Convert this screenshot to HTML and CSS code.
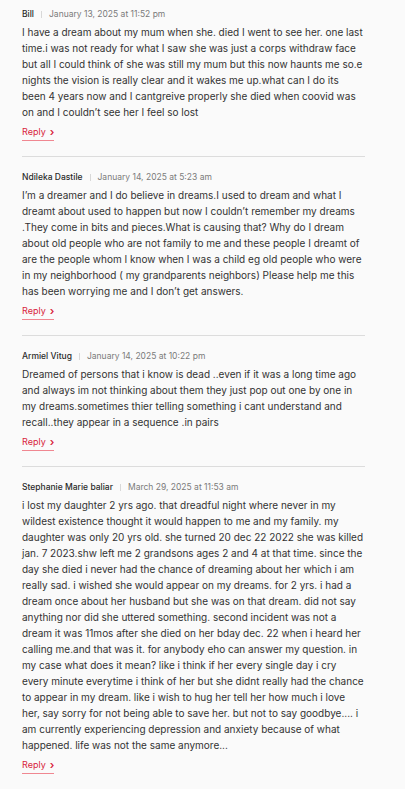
FILE: index.html
```html
<!DOCTYPE html>
<html lang="en">
<head>
<meta charset="utf-8">
<link rel="stylesheet" href="styles.css">
</head>
<body>
<ol class="comments">
  <li class="comment">
    <div class="meta"><span class="name">Bill</span><span class="sep"></span><span class="date">January 13, 2025 at 11:52 pm</span></div>
    <p class="text">I have a dream about my mum when she. died I went to see her. one last time.i was not ready for what I saw she was just a corps withdraw face but all I could think of she was still my mum but this now haunts me so.e nights the vision is really clear and it wakes me up.what can I do its been 4 years now and I cantgreive properly she died when coovid was on and I couldn’t see her I feel so lost</p>
    <a class="reply" href="#">Reply <span class="chev">›</span></a>
  </li>
  <li class="comment">
    <div class="meta"><span class="name">Ndileka Dastile</span><span class="sep"></span><span class="date">January 14, 2025 at 5:23 am</span></div>
    <p class="text">I’m a dreamer and I do believe in dreams.I used to dream and what I dreamt about used to happen but now I couldn’t remember my dreams .They come in bits and pieces.What is causing that? Why do I dream about old people who are not family to me and these people I dreamt of are the people whom I know when I was a child eg old people who were in my neighborhood ( my grandparents neighbors) Please help me this has been worrying me and I don’t get answers.</p>
    <a class="reply" href="#">Reply <span class="chev">›</span></a>
  </li>
  <li class="comment">
    <div class="meta"><span class="name">Armiel Vitug</span><span class="sep"></span><span class="date">January 14, 2025 at 10:22 pm</span></div>
    <p class="text">Dreamed of persons that i know is dead ..even if it was a long time ago and always im not thinking about them they just pop out one by one in my dreams.sometimes thier telling something i cant understand and recall..they appear in a sequence .in pairs</p>
    <a class="reply" href="#">Reply <span class="chev">›</span></a>
  </li>
  <li class="comment">
    <div class="meta"><span class="name">Stephanie Marie baliar</span><span class="sep"></span><span class="date">March 29, 2025 at 11:53 am</span></div>
    <p class="text">i lost my daughter 2 yrs ago. that dreadful night where never in my wildest existence thought it would happen to me and my family. my daughter was only 20 yrs old. she turned 20 dec 22 2022 she was killed jan. 7 2023.shw left me 2 grandsons ages 2 and 4 at that time. since the day she died i never had the chance of dreaming about her which i am really sad. i wished she would appear on my dreams. for 2 yrs. i had a dream once about her husband but she was on that dream. did not say anything nor did she uttered something. second incident was not a dream it was 11mos after she died on her bday dec. 22 when i heard her calling me.and that was it. for anybody eho can answer my question. in my case what does it mean? like i think if her every single day i cry every minute everytime i think of her but she didnt really had the chance to appear in my dream. like i wish to hug her tell her how much i love her, say sorry for not being able to save her. but not to say goodbye.... i am currently experiencing depression and anxiety because of what happened. life was not the same anymore...</p>
    <a class="reply" href="#">Reply <span class="chev">›</span></a>
  </li>
</ol>
</body>
</html>
```
FILE: styles.css
```css
html, body {
  margin: 0;
  padding: 0;
  background: #fafafa;
}
body {
  font-family: Inter, "Noto Sans", "Liberation Sans", sans-serif;
  color: #333;
}
.comments {
  list-style: none;
  margin: 0;
  padding: 0 40px 0 22px;
}
.comment {
  padding: 13px 0 15px;
  border-bottom: 1px solid #dcdcdc;
}
.comment:first-child {
  padding-top: 7px;
}
.comment:last-child {
  border-bottom: none;
}
.meta {
  display: flex;
  align-items: center;
  font-size: 8.5px;
  line-height: 14px;
}
.name {
  color: #2b2b2b;
  font-weight: 500;
}
.sep {
  width: 1px;
  height: 7px;
  background: #d8d8d8;
  margin: 0 7px;
}
.date {
  color: #7a7a7a;
}
.text {
  margin: 3px 0 5px;
  font-size: 10px;
  line-height: 16px;
  color: #333;
}
.reply {
  display: flex;
  width: max-content;
  align-items: center;
  gap: 4px;
  font-size: 9px;
  line-height: 14px;
  color: #d8233b;
  text-decoration: none;
  padding-bottom: 1px;
  border-bottom: 1px solid #f08791;
}
.chev {
  font-size: 11px;
  line-height: 14px;
  font-weight: 600;
}
```
